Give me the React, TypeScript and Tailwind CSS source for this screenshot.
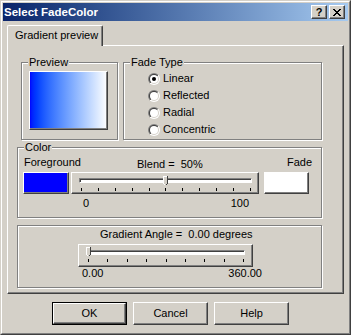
const raised =
  "border-t border-l border-t-white border-l-white border-r border-b border-r-[#404040] border-b-[#404040] shadow-[inset_-1px_-1px_0_#808080]";

function Radio({ n, checked }: { n: number; checked?: boolean }) {
  return (
    <svg width="12" height="12" viewBox="0 0 12 12" className="shrink-0">
      <defs>
        <linearGradient id={`ro${n}`} x1="0" y1="0" x2="1" y2="1">
          <stop offset="50%" stopColor="#808080" />
          <stop offset="50%" stopColor="#ffffff" />
        </linearGradient>
        <linearGradient id={`ri${n}`} x1="0" y1="0" x2="1" y2="1">
          <stop offset="50%" stopColor="#404040" />
          <stop offset="50%" stopColor="#d4d0c8" />
        </linearGradient>
      </defs>
      <circle cx="6" cy="6" r="6" fill={`url(#ro${n})`} />
      <circle cx="6" cy="6" r="5" fill={`url(#ri${n})`} />
      <circle cx="6" cy="6" r="4" fill="#fff" />
      {checked && <circle cx="6" cy="6" r="2" fill="#000" />}
    </svg>
  );
}

function Thumb({ left, top }: { left: number; top: number }) {
  return (
    <svg
      width="5"
      height="10"
      viewBox="0 0 5 10"
      className="absolute"
      style={{ left, top }}
      shapeRendering="crispEdges"
    >
      <path d="M0 0H5V7L2.5 9.5L0 7Z" fill="#d4d0c8" />
      <path d="M0.5 7.5V0.5H4" stroke="#fff" fill="none" />
      <path d="M4.5 0V7.5L2.5 9.5" stroke="#404040" fill="none" />
      <path d="M0.5 7.5L2.5 9.5" stroke="#fff" fill="none" />
    </svg>
  );
}

function Slider({
  box,
  channel,
  tickRow,
  ticks,
  span,
  value,
  thumbTop,
}: {
  box: string;
  channel: string;
  tickRow: string;
  ticks: number;
  span: number;
  value: number;
  thumbTop: number;
}) {
  return (
    <div className={`relative ${box} ${raised}`}>
      <div
        className={`${channel} h-[5px] border-t border-l border-t-[#808080] border-l-[#808080] border-b border-r border-b-white border-r-white bg-white shadow-[inset_1px_1px_0_#404040]`}
      />
      <div className={`${tickRow} flex justify-between`}>
        {Array.from({ length: ticks }).map((_, i) => (
          <div key={i} className="w-px h-[3px] bg-black" />
        ))}
      </div>
      <Thumb left={9 + value * span - 2} top={thumbTop} />
    </div>
  );
}

function Group({
  label,
  className,
  children,
}: {
  label?: string;
  className: string;
  children?: React.ReactNode;
}) {
  return (
    <div
      className={`relative shrink-0 border border-[#808080] shadow-[inset_1px_1px_0_#fff,1px_1px_0_#fff] ${className}`}
    >
      {label && (
        <span className="absolute -top-[7px] left-[6px] bg-[#d4d0c8] px-px leading-[13px]">
          {label}
        </span>
      )}
      {children}
    </div>
  );
}

function Button({ label, isDefault }: { label: string; isDefault?: boolean }) {
  const inner = (
    <div
      className={`flex items-center justify-center bg-[#d4d0c8] ${raised} ${
        isDefault ? "w-[73px] h-[21px]" : "w-[75px] h-[23px]"
      }`}
    >
      {label}
    </div>
  );
  return isDefault ? <div className="border border-black">{inner}</div> : inner;
}

function CloseGlyph() {
  const px: [number, number, number][] = [
    [0, 0, 2], [6, 0, 2],
    [1, 1, 2], [5, 1, 2],
    [2, 2, 4],
    [3, 3, 2],
    [2, 4, 4],
    [1, 5, 2], [5, 5, 2],
    [0, 6, 2], [6, 6, 2],
  ];
  return (
    <svg width="8" height="7" viewBox="0 0 8 7" shapeRendering="crispEdges">
      {px.map(([x, y, w], i) => (
        <rect key={i} x={x} y={y} width={w} height={1} fill="#000" />
      ))}
    </svg>
  );
}

export default function App() {
  return (
    <div className="w-[351px] h-[335px] bg-[#d4d0c8] border border-t-[#d4d0c8] border-l-[#d4d0c8] border-r-[#404040] border-b-[#404040] font-['Liberation_Sans',Arial,sans-serif] text-[11px] leading-[13px] text-black">
      <div className="h-full border border-t-white border-l-white border-r-[#808080] border-b-[#808080] p-px flex flex-col">
        {/* title bar */}
        <div className="h-[18px] shrink-0 flex items-center justify-between bg-linear-to-r from-[#0a246a] to-[#a6caf0] pl-[1px] pr-[3px]">
          <span className="font-bold text-white text-[11.5px]">Select FadeColor</span>
          <div className="flex gap-[2px]">
            <div className={`w-[16px] h-[14px] bg-[#d4d0c8] flex items-center justify-center font-bold text-[11px] leading-none ${raised}`}>
              ?
            </div>
            <div className={`w-[16px] h-[14px] bg-[#d4d0c8] flex items-center justify-center ${raised}`}>
              <CloseGlyph />
            </div>
          </div>
        </div>

        {/* tab */}
        <div className="mt-[4px] ml-[4px] relative z-10 -mb-px w-[96px] h-[21px] bg-[#d4d0c8] rounded-t-[2px] border-t border-l border-t-white border-l-white border-r border-r-[#404040] shadow-[inset_-1px_0_0_#808080] pt-[3px] pl-[7px]">
          Gradient preview
        </div>

        {/* panel */}
        <div className={`ml-[4px] w-[337px] h-[249px] shrink-0 ${raised}`}>
          <div className="flex mt-[16px] ml-[13px]">
            <Group label="Preview" className="w-[97px] h-[78px] pt-[8px] pl-[7px]">
              <div className={`w-[79px] h-[59px] bg-linear-to-r from-[#0000ff] to-white ${raised}`} />
            </Group>
            <Group label="Fade Type" className="ml-[5px] w-[199px] h-[78px] pt-[7px] pl-[24px]">
              {["Linear", "Reflected", "Radial", "Concentric"].map((t, i) => (
                <div key={t} className="h-[17px] flex items-center gap-[3px]">
                  <Radio n={i} checked={i === 0} />
                  <span>{t}</span>
                </div>
              ))}
            </Group>
          </div>

          <Group label="Color" className="ml-[9px] mt-[7px] w-[305px] h-[71px] pt-[8px] pl-[5px] flex">
            <div className="w-[46px] shrink-0">
              <div className="pl-px whitespace-nowrap">Foreground</div>
              <div className={`mt-[3px] h-[22px] bg-[#0000ff] ${raised}`} />
            </div>
            <div className="ml-[2px] w-[188px] shrink-0">
              <div className="h-[13px] pt-[2px] pl-[66px] whitespace-pre">Blend =  50%</div>
              <Slider
                box="mt-[3px] w-[188px] h-[22px]"
                channel="mt-[5px] ml-[7px] mr-[6px]"
                tickRow="mt-[5px] ml-[9px] mr-[7px]"
                ticks={11}
                span={168}
                value={0.5}
                thumbTop={3}
              />
              <div className="mt-[3px] flex justify-between pl-[12px] pr-[10px]">
                <span>0</span>
                <span>100</span>
              </div>
            </div>
            <div className="ml-[5px] w-[45px] shrink-0">
              <div className="pl-[23px] whitespace-nowrap">Fade</div>
              <div className={`mt-[3px] h-[22px] bg-white ${raised}`} />
            </div>
          </Group>

          <Group className="ml-[9px] mt-[7px] w-[305px] h-[63px] pt-[2px]">
            <div className="pl-[82px] whitespace-pre">Gradient Angle =  0.00 degrees</div>
            <Slider
              box="ml-[60px] mt-[3px] w-[175px] h-[23px]"
              channel="mt-[5px] ml-[7px] mr-[7px]"
              tickRow="mt-[4px] ml-[9px] mr-[8px]"
              ticks={9}
              span={154}
              value={0}
              thumbTop={2}
            />
            <div className="ml-[64px] w-[180px] flex justify-between">
              <span>0.00</span>
              <span>360.00</span>
            </div>
          </Group>
        </div>

        {/* buttons */}
        <div className="mt-[8px] pl-[49px] flex gap-[6px]">
          <Button label="OK" isDefault />
          <Button label="Cancel" />
          <Button label="Help" />
        </div>
      </div>
    </div>
  );
}
